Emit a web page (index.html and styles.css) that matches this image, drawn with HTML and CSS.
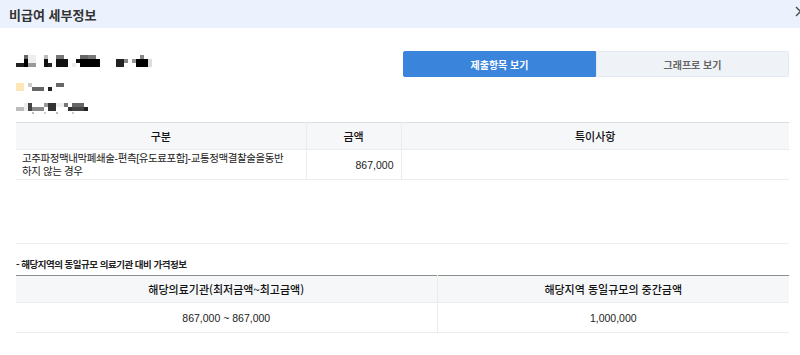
FILE: index.html
```html
<!DOCTYPE html>
<html lang="ko">
<head>
<meta charset="utf-8">
<title>비급여 세부정보</title>
<link rel="stylesheet" href="styles.css">
</head>
<body>
<div class="modal">
  <header class="modal-head">
    <h1 class="modal-title">비급여 세부정보</h1>
    <button class="close" type="button" aria-label="닫기">
      <svg width="11" height="11" viewBox="0 0 11 11"><path d="M1 1L10 10M10 1L1 10" stroke="#4a4a4a" stroke-width="1.4" fill="none"/></svg>
    </button>
  </header>

  <div class="modal-body">
    <div class="top">
      <div class="info">
        <svg class="mosaic m1" width="140" height="12" viewBox="0 0 140 12" shape-rendering="crispEdges">
          <rect x="8" y="0" width="4" height="4" fill="#666"/>
          <rect x="12" y="0" width="8" height="4" fill="#eee"/>
          <rect x="28" y="0" width="4" height="4" fill="#bbb"/>
          <rect x="40" y="0" width="8" height="4" fill="#777"/>
          <rect x="72" y="0" width="8" height="4" fill="#777"/>
          <rect x="124" y="0" width="4" height="4" fill="#888"/>
          <rect x="0" y="8" width="8" height="4" fill="#222"/>
          <rect x="8" y="4" width="4" height="8" fill="#000"/>
          <rect x="12" y="4" width="8" height="4" fill="#eee"/>
          <rect x="12" y="8" width="8" height="4" fill="#999"/>
          <rect x="28" y="4" width="4" height="8" fill="#111"/>
          <rect x="32" y="8" width="4" height="4" fill="#222"/>
          <rect x="40" y="4" width="12" height="8" fill="#111"/>
          <rect x="56" y="8" width="4" height="4" fill="#eee"/>
          <rect x="60" y="4" width="8" height="4" fill="#111"/>
          <rect x="64" y="4" width="20" height="8" fill="#000"/>
          <rect x="64" y="0" width="8" height="4" fill="#666"/>
          <rect x="100" y="4" width="8" height="8" fill="#222"/>
          <rect x="108" y="4" width="4" height="4" fill="#888"/>
          <rect x="116" y="4" width="4" height="4" fill="#999"/>
          <rect x="120" y="4" width="12" height="8" fill="#000"/>
          <rect x="132" y="4" width="4" height="8" fill="#ddd"/>
        </svg>
        <svg class="mosaic m2" width="60" height="8" viewBox="0 0 60 8" shape-rendering="crispEdges">
          <rect x="0" y="0" width="8" height="8" fill="#ffe6b5"/>
          <rect x="12" y="0" width="4" height="4" fill="#ccc"/>
          <rect x="16" y="4" width="12" height="4" fill="#666"/>
          <rect x="32" y="4" width="4" height="4" fill="#222"/>
          <rect x="40" y="0" width="8" height="4" fill="#666"/>
        </svg>
        <svg class="mosaic m3" width="80" height="12" viewBox="0 0 80 12" shape-rendering="crispEdges">
          <rect x="0" y="4" width="8" height="4" fill="#bbb"/>
          <rect x="8" y="0" width="4" height="8" fill="#eee"/>
          <rect x="12" y="0" width="4" height="8" fill="#444"/>
          <rect x="16" y="4" width="12" height="4" fill="#888"/>
          <rect x="28" y="0" width="4" height="4" fill="#999"/>
          <rect x="32" y="0" width="8" height="8" fill="#333"/>
          <rect x="40" y="0" width="8" height="4" fill="#eee"/>
          <rect x="48" y="0" width="4" height="4" fill="#777"/>
          <rect x="52" y="4" width="4" height="4" fill="#333"/>
          <rect x="56" y="0" width="12" height="4" fill="#666"/>
          <rect x="56" y="4" width="12" height="4" fill="#444"/>
          <rect x="68" y="4" width="4" height="4" fill="#222"/>
          <rect x="16" y="9" width="2" height="2" fill="#bbb"/>
          <rect x="28" y="9" width="2" height="2" fill="#ccc"/>
          <rect x="40" y="9" width="2" height="2" fill="#bbb"/>
          <rect x="56" y="9" width="2" height="2" fill="#ccc"/>
        </svg>
      </div>
      <div class="tabs">
        <button class="tab active" type="button">제출항목 보기</button>
        <button class="tab" type="button">그래프로 보기</button>
      </div>
    </div>

    <table class="grid items">
      <colgroup><col class="c-name"><col class="c-amt"><col></colgroup>
      <thead>
        <tr><th>구분</th><th>금액</th><th>특이사항</th></tr>
      </thead>
      <tbody>
        <tr>
          <td class="name">고주파정맥내막폐쇄술-편측[유도료포함]-교통정맥결찰술을동반하지 않는 경우</td>
          <td class="amt">867,000</td>
          <td></td>
        </tr>
      </tbody>
    </table>

    <div class="spacer"></div>

    <p class="caption">- 해당지역의 동일규모 의료기관 대비 가격정보</p>
    <table class="grid compare">
      <colgroup><col class="c-own"><col></colgroup>
      <thead>
        <tr><th>해당의료기관(최저금액~최고금액)</th><th>해당지역 동일규모의 중간금액</th></tr>
      </thead>
      <tbody>
        <tr><td>867,000 ~ 867,000</td><td>1,000,000</td></tr>
      </tbody>
    </table>
  </div>
</div>
</body>
</html>
```

FILE: styles.css
```css
* { box-sizing: border-box; }
html, body { margin: 0; padding: 0; background: #fff; }
body {
  width: 800px;
  height: 355px;
  overflow: hidden;
  font-family: "Liberation Sans", "Noto Sans CJK KR", sans-serif;
  color: #222;
}
.modal-head {
  height: 28px;
  background: #ebf2fd;
  display: flex;
  align-items: center;
  justify-content: space-between;
  padding-left: 9px;
}
.modal-title {
  margin: 0;
  font-family: "Noto Sans CJK KR", sans-serif;
  font-size: 13px;
  font-weight: 700;
  color: #333;
}
.close {
  border: 0;
  background: none;
  padding: 0;
  margin-right: -6px;
  margin-top: -6px;
  display: flex;
  flex: none;
}
.modal-body {
  padding: 0 11px 0 16px;
}
.top {
  display: flex;
  justify-content: space-between;
  align-items: flex-start;
  height: 94px;
  padding-top: 23px;
}
.info {
  display: flex;
  flex-direction: column;
  align-items: flex-start;
}
.mosaic { display: block; }
.m1 { margin-top: 4px; }
.m2 { margin-top: 16px; }
.m3 { margin-top: 12px; }
.tabs {
  display: flex;
  width: 386px;
  height: 26px;
}
.tab {
  flex: 1;
  font-family: "Noto Sans CJK KR", sans-serif;
  font-size: 10px;
  font-weight: 700;
  border: 1px solid #e2e8ef;
  background: #eff3f8;
  color: #666;
  border-radius: 0 2px 2px 0;
  padding: 0;
}
.tab.active {
  background: #3a84dc;
  border-color: #3a84dc;
  color: #fff;
  border-radius: 2px 0 0 2px;
}
.grid {
  width: 100%;
  border-collapse: collapse;
  table-layout: fixed;
  font-size: 11px;
}
.grid th {
  background: #f6f7f9;
  font-weight: 500;
  color: #111;
  height: 27px;
  padding: 0;
  border-bottom: 1px solid #ececec;
  font-family: "Noto Sans CJK KR", sans-serif;
  font-size: 11px;
}
.grid td {
  border-bottom: 1px solid #ececec;
  padding: 0;
  color: #222;
  font-size: 10.5px;
  font-family: "Liberation Sans", "Noto Sans CJK KR", sans-serif;
}
.grid th + th, .grid td + td { border-left: 1px solid #ececec; }
.items { border-top: 1px solid #e0e0e0; }
.items col.c-name { width: 290px; }
.items col.c-amt { width: 95px; }
.items td { height: 30px; }
.items td.name {
  padding: 0 16px 0 6px;
  line-height: 13px;
  text-align: left;
  letter-spacing: -0.4px;
}
.items td.amt { text-align: right; padding-right: 7px; }
.spacer {
  height: 64px;
  border-bottom: 1px solid #eeeeee;
}
.caption {
  margin: 0;
  padding-top: 13px;
  height: 31px;
  font-family: "Noto Sans CJK KR", sans-serif;
  font-size: 9.5px;
  font-weight: 700;
  color: #222;
  letter-spacing: -0.5px;
}
.compare { border-top: 1px solid #8e8e8e; }
.compare col.c-own { width: 421px; }
.compare th { height: 27px; }
.compare td { height: 30px; text-align: center; }
```
